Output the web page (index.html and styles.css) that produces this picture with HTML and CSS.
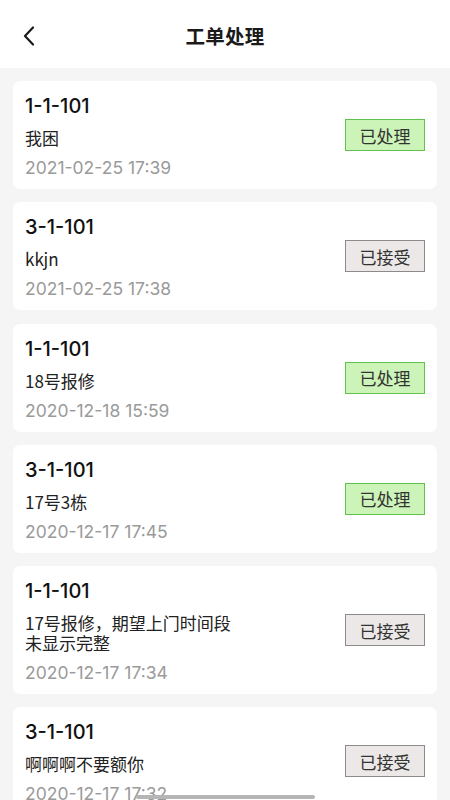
FILE: index.html
```html
<!DOCTYPE html>
<html lang="zh">
<head>
<meta charset="utf-8">
<link rel="stylesheet" href="styles.css">
</head>
<body>
<header class="nav">
  <svg class="back" width="14" height="20" viewBox="0 0 14 20"><path d="M11 1.5 L3 10 L11 18.5" fill="none" stroke="#1a1a1a" stroke-width="2.2" stroke-linecap="round" stroke-linejoin="round"/></svg>
  <h1 class="title">工单处理</h1>
</header>
<main class="list">
  <div class="card">
    <div class="info"><div class="room">1-1-101</div><div class="desc">我困</div><div class="date">2021-02-25 17:39</div></div>
    <span class="badge done">已处理</span>
  </div>
  <div class="card">
    <div class="info"><div class="room">3-1-101</div><div class="desc">kkjn</div><div class="date">2021-02-25 17:38</div></div>
    <span class="badge accepted">已接受</span>
  </div>
  <div class="card">
    <div class="info"><div class="room">1-1-101</div><div class="desc">18号报修</div><div class="date">2020-12-18 15:59</div></div>
    <span class="badge done">已处理</span>
  </div>
  <div class="card">
    <div class="info"><div class="room">3-1-101</div><div class="desc">17号3栋</div><div class="date">2020-12-17 17:45</div></div>
    <span class="badge done">已处理</span>
  </div>
  <div class="card">
    <div class="info"><div class="room">1-1-101</div><div class="desc"><span class="line">17号报修，期望上门时间段</span><span class="line">未显示完整</span></div><div class="date">2020-12-17 17:34</div></div>
    <span class="badge accepted">已接受</span>
  </div>
  <div class="card">
    <div class="info"><div class="room">3-1-101</div><div class="desc">啊啊啊不要额你</div><div class="date">2020-12-17 17:32</div></div>
    <span class="badge accepted">已接受</span>
  </div>
</main>
<div class="indicator"></div>
</body>
</html>
```
FILE: styles.css
```css
html, body {
  margin: 0;
  padding: 0;
}
body {
  background: #f5f5f5;
  font-family: "Inter", "Noto Sans CJK SC", sans-serif;
  color: #1a1a1a;
  height: 800px;
  overflow: hidden;
}
.nav {
  height: 68px;
  background: #fff;
  display: flex;
  align-items: center;
  justify-content: center;
  position: relative;
}
.back {
  position: absolute;
  left: 22px;
  top: 26px;
}
.title {
  margin: 0;
  font-size: 19.5px;
  font-weight: 700;
  font-family: "Noto Sans CJK SC", sans-serif;
  color: #1a1a1a;
  letter-spacing: 0.3px;
  margin-top: 2px;
}
.list {
  padding: 13px 13px 0;
  display: flex;
  flex-direction: column;
  gap: 13.3px;
}
.card {
  background: #fff;
  border-radius: 7px;
  padding: 11px 12px;
  display: flex;
  align-items: center;
  justify-content: space-between;
}
.room {
  font-size: 20px;
  line-height: 28px;
  font-weight: 500;
  color: #111;
}
.desc {
  margin-top: 8px;
  font-size: 17px;
  line-height: 20px;
  color: #222;
  font-family: "Noto Sans CJK SC", sans-serif;
}
.line {
  display: block;
  height: 20px;
}
.date {
  margin-top: 10px;
  font-size: 17.5px;
  line-height: 20px;
  color: #9a9a9a;
}
.badge {
  width: 78px;
  height: 30px;
  display: flex;
  align-items: center;
  justify-content: center;
  font-size: 17px;
  font-family: "Noto Sans CJK SC", sans-serif;
  color: #333;
  flex: none;
}
.badge.done {
  background: #ccf3b8;
  border: 1px solid #5ec24c;
}
.badge.accepted {
  background: #ece8e7;
  border: 1px solid #8c8a8a;
}
.indicator {
  position: fixed;
  left: 136px;
  width: 179px;
  top: 795px;
  height: 4px;
  border-radius: 2px;
  background: #b5b5b5;
}
```
